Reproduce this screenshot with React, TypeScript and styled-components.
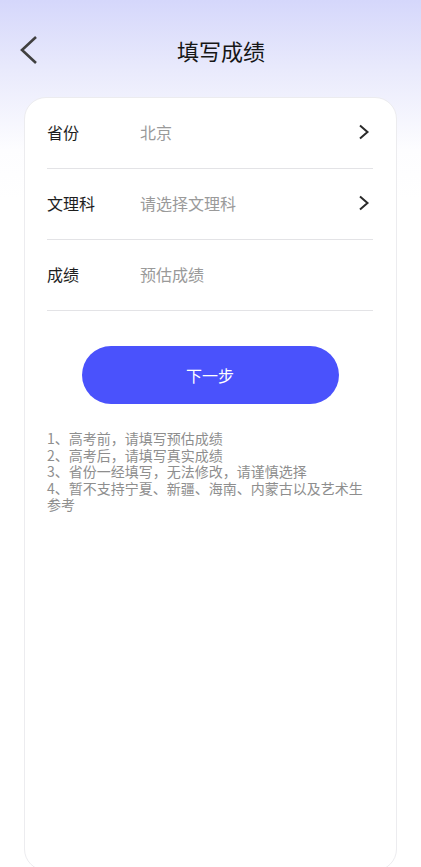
import React from "react";
import styled, { createGlobalStyle } from "styled-components";

const GlobalStyle = createGlobalStyle`
  html, body {
    margin: 0;
    padding: 0;
    background: #ffffff;
  }
  body {
    font-family: "Noto Sans CJK SC", "Noto Sans", sans-serif;
  }
`;

const Page = styled.div`
  width: 421px;
  height: 867px;
  box-sizing: border-box;
  display: flex;
  flex-direction: column;
  background: linear-gradient(180deg, #d5d7fb 0%, #e9eafc 70px, #fdfdff 150px, #ffffff 200px);
  overflow: hidden;
`;

const NavBar = styled.div`
  height: 97px;
  flex-shrink: 0;
  display: grid;
  grid-template-columns: 60px 1fr 39px;
  align-items: start;
  padding-top: 31px;
  box-sizing: border-box;
`;

const BackButton = styled.div`
  display: flex;
  padding-left: 18px;
  padding-top: 4px;
`;

const Title = styled.h1`
  margin: 0;
  text-align: center;
  font-size: 22px;
  font-weight: 400;
  line-height: 38px;
  color: #161616;
`;

const Card = styled.div`
  flex: 1;
  margin: 0 24px -4px;
  background: #ffffff;
  border: 1px solid #ececef;
  border-radius: 22px;
  padding: 0 23px 0 22px;
  display: flex;
  flex-direction: column;
`;

const Row = styled.div`
  height: 71px;
  flex-shrink: 0;
  box-sizing: border-box;
  display: flex;
  align-items: center;
  border-bottom: 1px solid #e3e3e6;
  padding-bottom: 3px;
`;

const Label = styled.span`
  width: 93px;
  font-size: 16px;
  color: #1e1e1e;
`;

const Value = styled.span<{ $muted?: boolean }>`
  flex: 1;
  font-size: 16px;
  color: ${(p) => (p.$muted ? "#9a9a9a" : "#333")};
`;

const Arrow = styled.div`
  display: flex;
  padding-right: 3px;
`;

const NextButton = styled.button`
  align-self: center;
  flex-shrink: 0;
  margin-top: 35px;
  width: 257px;
  height: 58px;
  border: none;
  border-radius: 29px;
  background: #4a52fc;
  color: #ffffff;
  font-size: 16px;
  font-family: inherit;
`;

const Notes = styled.div`
  margin-top: 26px;
  width: 326px;
  font-size: 14px;
  line-height: 16.5px;
  color: #8e8e8e;
`;

const Chevron = ({ left }: { left?: boolean }) =>
  left ? (
    <svg width="22" height="30" viewBox="0 0 22 30">
      <path d="M18 2 L4 15 L18 28" fill="none" stroke="#404040" strokeWidth="2.6" strokeLinejoin="miter" />
    </svg>
  ) : (
    <svg width="12" height="16" viewBox="0 0 12 16">
      <path d="M2 1.5 L9.5 8 L2 14.5" fill="none" stroke="#2a2a2a" strokeWidth="2" />
    </svg>
  );

const rows = [
  { label: "省份", value: "北京", arrow: true },
  { label: "文理科", value: "请选择文理科", arrow: true },
  { label: "成绩", value: "预估成绩", arrow: false },
];

const notes = [
  "1、高考前，请填写预估成绩",
  "2、高考后，请填写真实成绩",
  "3、省份一经填写，无法修改，请谨慎选择",
  "4、暂不支持宁夏、新疆、海南、内蒙古以及艺术生参考",
];

export default function App() {
  return (
    <>
      <GlobalStyle />
      <Page>
        <NavBar>
          <BackButton>
            <Chevron left />
          </BackButton>
          <Title>填写成绩</Title>
          <div />
        </NavBar>
        <Card>
          {rows.map((r) => (
            <Row key={r.label}>
              <Label>{r.label}</Label>
              <Value $muted>{r.value}</Value>
              {r.arrow && (
                <Arrow>
                  <Chevron />
                </Arrow>
              )}
            </Row>
          ))}
          <NextButton>下一步</NextButton>
          <Notes>
            {notes.map((n) => (
              <div key={n}>{n}</div>
            ))}
          </Notes>
        </Card>
      </Page>
    </>
  );
}
